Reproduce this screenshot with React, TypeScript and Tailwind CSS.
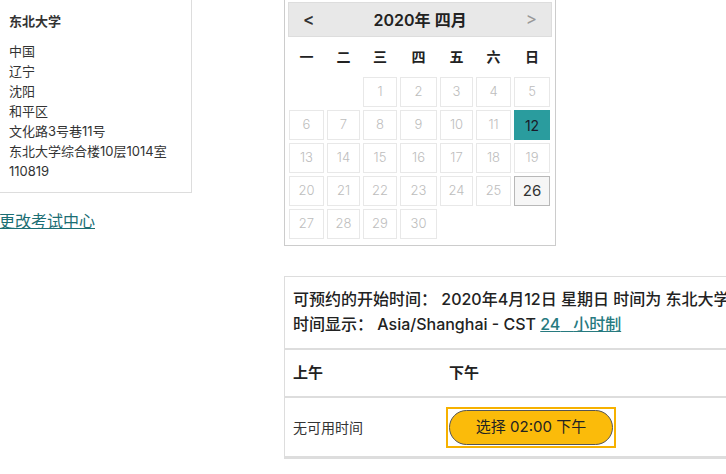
import React from "react";

const font = { fontFamily: '"Inter", "Noto Sans CJK SC", sans-serif' };

const weekdays = ["一", "二", "三", "四", "五", "六", "日"];

function Cell({ d }: { d: number | null }) {
  if (d === null) return <div />;
  if (d === 12)
    return (
      <div className="flex items-center justify-center border border-[#2a9c9e] bg-[#2a9c9e] text-[14px] text-[#1a1a2a]">
        {d}
      </div>
    );
  if (d === 26)
    return (
      <div className="flex items-center justify-center border border-[#b8b8b8] bg-[#f6f6f6] text-[15px] text-[#333]">
        {d}
      </div>
    );
  return (
    <div className="flex items-center justify-center border border-[#e8e8e8] text-[13px] font-light text-[#bdbdbd]">
      {d}
    </div>
  );
}

export default function App() {
  const days: (number | null)[] = [null, null];
  for (let i = 1; i <= 30; i++) days.push(i);
  return (
    <div
      className="relative flex h-[474px] w-[726px] overflow-hidden bg-white text-[#333]"
      style={font}
    >
      {/* left column */}
      <div className="flex w-[192px] shrink-0 flex-col">
        <div className="-ml-[2px] -mt-[2px] border border-[#dddddd] pb-[11px] pl-[10px] pt-[12px] text-[13px] leading-[20px]">
          <div className="font-bold text-[#333]">东北大学</div>
          <div className="mt-[10px]">中国</div>
          <div>辽宁</div>
          <div>沈阳</div>
          <div>和平区</div>
          <div>文化路3号巷11号</div>
          <div>东北大学综合楼10层1014室</div>
          <div>110819</div>
        </div>
        <a
          href="#"
          className="-ml-[1px] mt-[17px] text-[16px] leading-[22px] text-[#1b6e74] underline"
        >
          更改考试中心
        </a>
      </div>

      {/* right column */}
      <div className="ml-[92px] flex flex-col">
        {/* calendar */}
        <div className="-mt-[3px] w-[272px] border border-[#cccccc] px-[3px] pb-[6px] pt-[4px]">
          <div className="flex h-[35px] items-center justify-between border border-[#dddddd] bg-[#e8e8e8] px-[14px]">
            <span className="text-[17px] font-semibold text-[#333]">&lt;</span>
            <span className="text-[16px] font-semibold text-[#222]">2020年 四月</span>
            <span className="text-[17px] text-[#999]">&gt;</span>
          </div>
          <div className="ml-[1px] grid h-[38px] grid-cols-[35px_33px_34px_37px_33px_35px_36px] items-center gap-x-[3px] text-[14px] font-semibold text-[#222]">
            {weekdays.map((w) => (
              <div key={w} className="text-center">
                {w}
              </div>
            ))}
          </div>
          <div className="ml-[1px] mt-[2px] grid grid-cols-[35px_33px_34px_37px_33px_35px_36px] auto-rows-[30px] gap-[3px]">
            {days.map((d, i) => (
              <Cell key={i} d={d} />
            ))}
          </div>
        </div>

        {/* info / times */}
        <div className="mt-[30px] w-[600px] border border-r-0 border-[#dddddd]">
          <div className="whitespace-nowrap px-[8px] pb-[11px] pt-[10px] text-[16px] font-medium leading-[25px] text-[#222]">
            <div>可预约的开始时间： 2020年4月12日 星期日 时间为 东北大学</div>
            <div>
              时间显示： Asia/Shanghai - CST{" "}
              <a href="#" className="text-[#277a7f] underline">
                24{"\u00a0\u00a0\u00a0"}小时制
              </a>
            </div>
          </div>
          <div className="flex h-[48px] items-center border-t-2 border-[#dddddd] text-[15px] font-bold text-[#222]">
            <div className="w-[156px] pl-[8px]">上午</div>
            <div className="pl-[8px]">下午</div>
          </div>
          <div className="flex h-[62px] items-center border-t-2 border-b-2 border-[#dddddd] text-[14px]">
            <div className="w-[156px] pl-[8px] text-[#333]">无可用时间</div>
            <div className="pl-[5px]">
              <div className="border-2 border-[#f6b100] bg-white p-[1px]">
                <button className="flex h-[35px] w-[164px] items-center justify-center rounded-full border border-[#555] bg-[#fbbb0a] text-[15px] text-[#222]">
                  选择 02:00 下午
                </button>
              </div>
            </div>
          </div>
        </div>
      </div>
    </div>
  );
}
